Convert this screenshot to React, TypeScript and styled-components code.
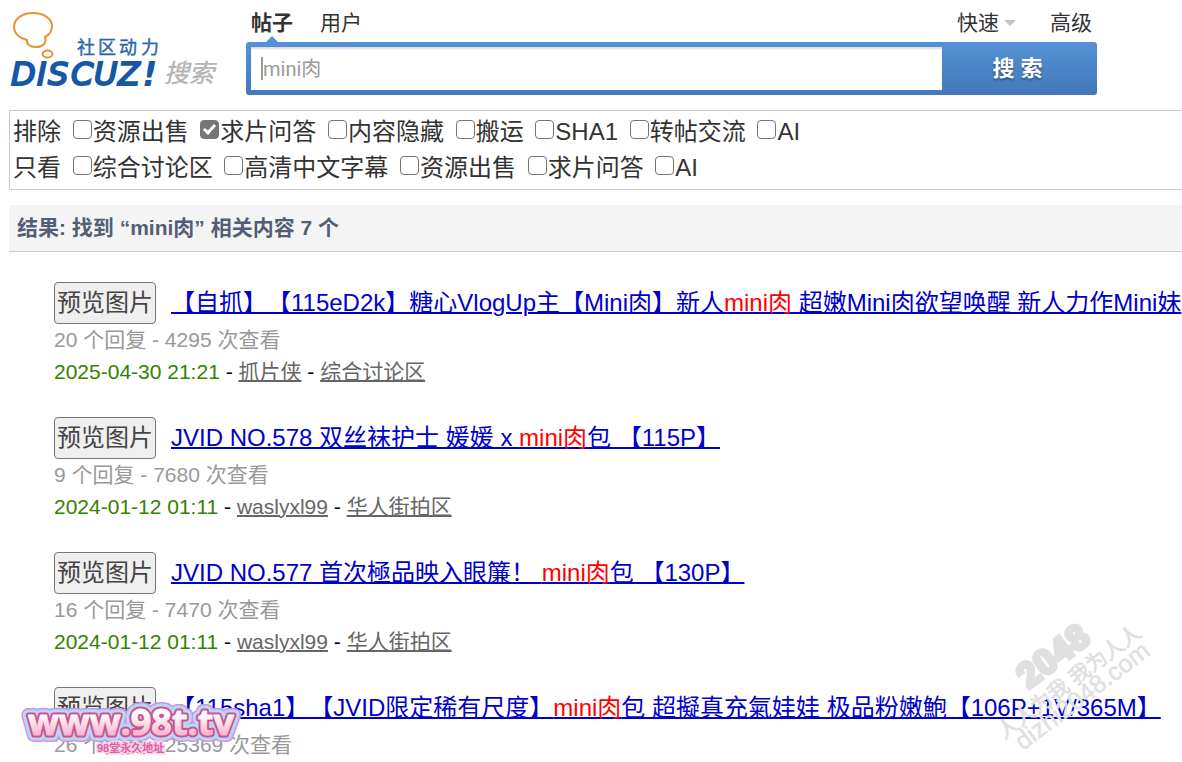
import React from "react";
import styled, { createGlobalStyle } from "styled-components";

const sans = `"Liberation Sans", "Noto Sans CJK SC", sans-serif`;
const ui = `Roboto, "Noto Sans CJK SC", sans-serif`;

const GlobalStyle = createGlobalStyle`
  *, *::before, *::after { box-sizing: border-box; }
  body {
    margin: 0;
    background: #fff;
    color: #333;
    font-family: ${sans};
    text-spacing-trim: space-all;
  }
`;

const Page = styled.div`
  position: relative;
  overflow: hidden;
  padding-left: 9px;
`;

const Header = styled.header`
  display: flex;
  margin-bottom: 15px;
`;

const LogoLink = styled.a`
  flex: 0 0 237px;
  height: 95px;
`;

const SearchArea = styled.form`
  flex: 0 1 851px;
  min-width: 0;
`;

const Nav = styled.nav`
  display: flex;
  align-items: center;
  height: 42px;
  padding: 4px 5px 0;
  gap: 27px;
  font-size: 21px;
  line-height: 30px;
`;

const NavLink = styled.a<{ $active?: boolean }>`
  position: relative;
  color: #333;
  text-decoration: none;
  font-weight: ${(p) => (p.$active ? 700 : 400)};

  &::after {
    content: "";
    display: ${(p) => (p.$active ? "block" : "none")};
    position: absolute;
    left: 50%;
    bottom: -4px;
    margin-left: -6px;
    border: 6px solid transparent;
    border-top: 0;
    border-bottom-color: #5491d5;
  }
`;

const NavSide = styled.div`
  display: flex;
  gap: 34px;
  margin-left: auto;
`;

const QuickLink = styled(NavLink)`
  display: flex;
  align-items: center;
  gap: 5px;

  &::after {
    display: block;
    position: static;
    margin: 0;
    border: 6px solid transparent;
    border-bottom: 0;
    border-top-color: #c4c4c4;
  }
`;

const SearchBar = styled.div`
  display: flex;
  height: 53px;
  padding: 5px 0 5px 5px;
  border-radius: 3px;
  background: linear-gradient(#5492d6, #4478b8);
`;

const Field = styled.div`
  flex: 1;
  display: flex;
  align-items: center;
  min-width: 0;
  padding-left: 10px;
  background: #fff;
  box-shadow: inset 0 2px 2px #d9dde3;

  &::before {
    content: "";
    width: 2px;
    height: 23px;
    background: #999;
  }
`;

const Input = styled.input`
  flex: 1;
  min-width: 0;
  padding: 0;
  border: 0;
  outline: 0;
  background: transparent;
  color: #999;
  font: 20px/30px ${ui};

  &::placeholder { color: #999; opacity: 1; }
`;

const Submit = styled.button`
  width: 155px;
  padding: 0 4px 0 0;
  border: 0;
  background: transparent;
  color: #fff;
  font: 700 22px/30px ${sans};
  text-shadow: 0 2px 2px #2c5588;
`;

const Filters = styled.section`
  padding: 3px;
  border: 1px solid #ccc;
  border-right: 0;
  font-size: 24px;
  line-height: 36px;
`;

const FilterRow = styled.div``;

const Option = styled.label`
  white-space: nowrap;
`;

const Check = styled.input`
  appearance: none;
  position: relative;
  width: 19px;
  height: 19px;
  margin: 0 1px 0 5px;
  vertical-align: 1px;
  border: 1px solid #767676;
  border-radius: 4px;
  background: #fff;

  &:checked { background: #767676; }

  &:checked::after {
    content: "";
    position: absolute;
    left: 5px;
    top: 1px;
    width: 7px;
    height: 12px;
    border: solid #fff;
    border-width: 0 3px 3px 0;
    transform: rotate(42deg);
  }
`;

const Summary = styled.h2`
  margin: 15px 0 30px;
  padding: 8px;
  border-bottom: 1px solid #ccc;
  background: #f4f4f4;
  color: #535e74;
  font-size: 21px;
  line-height: 30px;
`;

const Results = styled.ul`
  display: flex;
  flex-direction: column;
  gap: 29px;
  margin: 0;
  padding: 0 0 0 45px;
  list-style: none;
`;

const TitleRow = styled.div`
  display: flex;
  align-items: center;
  gap: 15px;
  height: 42px;
  white-space: nowrap;
`;

const Preview = styled.button`
  flex: none;
  height: 42px;
  padding: 0 2px;
  border: 1px solid #767676;
  border-radius: 4px;
  background: #efefef;
  color: #444;
  font: 24px/38px ${sans};
`;

const Title = styled.a`
  color: #00c;
  font-size: 24px;
  line-height: 36px;
  text-decoration: underline 2px;
`;

const Hit = styled.em`
  color: #f00;
  font-style: normal;
`;

const Stats = styled.p`
  margin: 0;
  color: #999;
  font-size: 21px;
  line-height: 32px;
`;

const Origin = styled(Stats)`
  color: #000;
`;

const Time = styled.time`
  color: #378000;
`;

const MetaLink = styled.a`
  color: #666;
  text-decoration: underline 2px;
`;

const StampRight = styled.svg`
  position: absolute;
  top: 610px;
  right: 22px;
  pointer-events: none;
`;

const StampLeft = styled.svg`
  position: absolute;
  top: 692px;
  left: 20px;
  pointer-events: none;
`;

const Logo = () => (
  <svg width="220" height="95" viewBox="9 0 220 95" role="img" aria-label="Discuz!">
    <g fill="none" stroke="#e8942f" strokeWidth="2">
      <path d="M27 40C19 38 14 33 14 27C14 19 22 13 33 13C44 13 52 19 52 26C52 31 49 35 45 37C47 43 43 47 36 47C30 47 26 44 27 40Z" />
      <ellipse cx="47.500" cy="54" rx="5" ry="3.500" />
    </g>
    <text x="77 98 119 141" y="54" fill="#2a66b0" stroke="#2a66b0" strokeWidth="0.400" fontFamily={sans} fontSize="18">社区动力</text>
    <text x="11 37 48 71 94 118" y="85" fill="#1558a8" stroke="#1558a8" strokeWidth="2" fontFamily="DejaVu Sans, sans-serif" fontStyle="italic" fontSize="32">DISCUZ</text>
    <text x="142" y="86" fill="#1558a8" fontFamily="DejaVu Sans, sans-serif" fontWeight="700" fontStyle="italic" fontSize="34">!</text>
    <text x="164" y="82" fill="#b4b4b4" stroke="#b4b4b4" strokeWidth="0.400" fontFamily={sans} fontStyle="italic" fontSize="25">搜索</text>
  </svg>
);

const brand = {
  x: 8,
  y: 43,
  fontFamily: `"Open Sans", sans-serif`,
  fontWeight: 700,
  fontSize: 36,
  strokeLinejoin: "round" as const,
};

const filters = [
  { name: "排除", options: ["资源出售", "求片问答", "内容隐藏", "搬运", "SHA1", "转帖交流", "AI"], checked: "求片问答" },
  { name: "只看", options: ["综合讨论区", "高清中文字幕", "资源出售", "求片问答", "AI"], checked: "" },
];

const results = [
  {
    before: "【自抓】【115eD2k】糖心VlogUp主【Mini肉】新人",
    after: " 超嫩Mini肉欲望唤醒 新人力作Mini妹",
    replies: 20, views: 4295, time: "2025-04-30 21:21", author: "抓片侠", forum: "综合讨论区",
  },
  {
    before: "JVID NO.578 双丝袜护士 媛媛 x ",
    after: "包 【115P】",
    replies: 9, views: 7680, time: "2024-01-12 01:11", author: "waslyxl99", forum: "华人街拍区",
  },
  {
    before: "JVID NO.577 首次極品映入眼簾！ ",
    after: "包 【130P】",
    replies: 16, views: 7470, time: "2024-01-12 01:11", author: "waslyxl99", forum: "华人街拍区",
  },
  {
    before: "【115sha1】【JVID限定稀有尺度】",
    after: "包 超擬真充氣娃娃 极品粉嫩鮑【106P+1V/365M】",
    replies: 26, views: 25369,
  },
];

export default function App() {
  return (
    <>
      <GlobalStyle />
      <Page>
        <Header>
          <LogoLink href="#"><Logo /></LogoLink>
          <SearchArea onSubmit={(e) => e.preventDefault()}>
            <Nav>
              <NavLink href="#" $active>帖子</NavLink>
              <NavLink href="#">用户</NavLink>
              <NavSide>
                <QuickLink href="#">快速</QuickLink>
                <NavLink href="#">高级</NavLink>
              </NavSide>
            </Nav>
            <SearchBar>
              <Field>
                <Input type="text" placeholder="mini肉" aria-label="搜索" />
              </Field>
              <Submit type="submit">搜 索</Submit>
            </SearchBar>
          </SearchArea>
        </Header>

        <Filters>
          {filters.map((row) => (
            <FilterRow key={row.name}>
              <span>{row.name}</span>
              {row.options.map((o) => (
                <React.Fragment key={o}>
                  {" "}
                  <Option>
                    <Check type="checkbox" defaultChecked={o === row.checked} />
                    {o}
                  </Option>
                </React.Fragment>
              ))}
            </FilterRow>
          ))}
        </Filters>

        <Summary>结果: 找到 “mini肉” 相关内容 7 个</Summary>

        <Results>
          {results.map((r) => (
            <li key={r.views}>
              <TitleRow>
                <Preview type="button">预览图片</Preview>
                <Title href="#">{r.before}<Hit>mini肉</Hit>{r.after}</Title>
              </TitleRow>
              <Stats>{r.replies} 个回复 - {r.views} 次查看</Stats>
              {r.time && (
                <Origin>
                  <Time>{r.time}</Time> - <MetaLink href="#">{r.author}</MetaLink> - <MetaLink href="#">{r.forum}</MetaLink>
                </Origin>
              )}
            </li>
          ))}
        </Results>

        <StampRight width="180" height="152" viewBox="980 610 180 152" fill="#e0e0e0" aria-hidden="true">
          <text transform="translate(1028 690) rotate(-37)" fontFamily="Roboto, sans-serif" fontWeight="900" fontSize="35" stroke="#e0e0e0" strokeWidth="3">2048</text>
          <text transform="translate(1004 740) rotate(-37)" fontFamily={sans} fontSize="21" stroke="#e0e0e0" strokeWidth="0.700">人人为我 我为人人</text>
          <text transform="translate(1023 751) rotate(-37)" fontFamily={sans} fontSize="25" stroke="#e0e0e0" strokeWidth="0.400">dizhi2048.com</text>
        </StampRight>

        <StampLeft width="230" height="70" aria-hidden="true">
          <defs>
            <linearGradient id="candy" x1="0" y1="0" x2="0" y2="1">
              <stop offset="0.35" stopColor="#fff" />
              <stop offset="0.85" stopColor="#f7a8c8" />
            </linearGradient>
          </defs>
          <text {...brand} fill="#c796dc" stroke="#c796dc" strokeWidth="14">www.98t.tv</text>
          <text {...brand} fill="#b8d6fa" stroke="#b8d6fa" strokeWidth="11">www.98t.tv</text>
          <text {...brand} fill="#cf5388" stroke="#cf5388" strokeWidth="5">www.98t.tv</text>
          <text {...brand} fill="url(#candy)" stroke="url(#candy)" strokeWidth="1">www.98t.tv</text>
          <text x="77" y="60" fill="#e0609c" stroke="#f7d3ea" strokeWidth="3" paintOrder="stroke" fontFamily={sans} fontWeight="700" fontSize="11">98堂永久地址</text>
        </StampLeft>
      </Page>
    </>
  );
}
